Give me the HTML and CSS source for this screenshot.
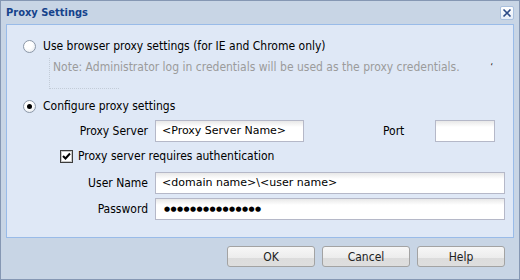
FILE: index.html
```html
<!DOCTYPE html>
<html>
<head>
    <meta charset="utf-8" />
    <title>Proxy Settings</title>
    <link rel="stylesheet" href="styles.css">
</head>
<body>
    <div class="win">
        <div class="titleBar">
            <span class="title">Proxy Settings</span>
            <span class="closeBtn">
                <svg width="10" height="10" viewBox="0 0 10 10">
                    <path d="M1.5 1.5 L8.5 8.5 M8.5 1.5 L1.5 8.5" stroke="#2b4a86" stroke-width="1.6" fill="none"/>
                </svg>
            </span>
        </div>
        <div class="panel">
            <div class="opt optFirst"><span class="radio"></span>Use browser proxy settings (for IE and Chrome only)</div>
            <div class="note">
                <span class="noteText">Note: Administrator log in credentials will be used as the proxy credentials.</span>
                <span class="tick">&#8216;</span>
            </div>
            <div class="opt optSecond"><span class="radio on"></span>Configure proxy settings</div>
            <div class="row rowServer">
                <label class="lbl">Proxy Server</label>
                <div class="field fieldServer">&lt;Proxy Server Name&gt;</div>
                <label class="lblPort">Port</label>
                <div class="field fieldPort"></div>
            </div>
            <div class="chkRow">
                <span class="check">
                    <svg width="9" height="9" viewBox="0 0 9 9">
                        <path d="M1 4 L3.5 6.5 L8 1.5" stroke="#000" stroke-width="2" fill="none"/>
                    </svg>
                </span>
                Proxy server requires authentication
            </div>
            <div class="row rowUser">
                <label class="lbl">User Name</label>
                <div class="field fieldWide">&lt;domain name&gt;\&lt;user name&gt;</div>
            </div>
            <div class="row rowPass">
                <label class="lbl">Password</label>
                <div class="field fieldWide pass">&#9679;&#9679;&#9679;&#9679;&#9679;&#9679;&#9679;&#9679;&#9679;&#9679;&#9679;&#9679;&#9679;&#9679;&#9679;</div>
            </div>
        </div>
        <div class="buttons">
            <button class="btn">OK</button>
            <button class="btn">Cancel</button>
            <button class="btn">Help</button>
        </div>
    </div>
</body>
</html>
```

FILE: styles.css
```css
body {
    margin: 0;
    font-family: "DejaVu Sans Condensed", "DejaVu Sans", sans-serif;
    font-size: 12px;
    color: #000;
    background: #fff;
}
.win {
    width: 518px;
    height: 278px;
    border: 1px solid #8597b3;
    background-color: #c8d5e5;
}
.titleBar {
    height: 23px;
    display: flex;
    align-items: center;
    padding: 0 5px 0 5px;
}
.title {
    font-weight: bold;
    font-size: 11px;
    color: #15428b;
    flex-grow: 1;
}
.closeBtn {
    width: 12px;
    height: 12px;
    border: 1px solid #a9c0de;
    border-radius: 2px;
    background: linear-gradient(#ffffff, #e4ecf7);
    display: flex;
    align-items: center;
    justify-content: center;
    margin-top: 1px;
}
.panel {
    margin: 0 5px;
    border: 1px solid #99bbe8;
    background-color: #dfe8f6;
    height: 199px;
    padding-top: 13px;
}
.opt {
    display: flex;
    align-items: center;
    height: 16px;
    padding-left: 16px;
}
.radio {
    width: 11px;
    height: 11px;
    border: 1px solid #8c98a8;
    border-radius: 50%;
    background: radial-gradient(circle at 40% 35%, #ffffff 40%, #dde3ea);
    margin-right: 7px;
    position: relative;
}
.radio.on::after {
    content: "";
    position: absolute;
    left: 3px;
    top: 3px;
    width: 5px;
    height: 5px;
    border-radius: 50%;
    background: #000;
}
.note {
    margin: 5px 0 0 42px;
    height: 30px;
    display: flex;
    align-items: flex-start;
    position: relative;
}
.note::before {
    content: "";
    position: absolute;
    left: 0;
    top: -1px;
    width: 69px;
    height: 30px;
    border-left: 1px dotted #c3ccd8;
    border-bottom: 1px dotted #c3ccd8;
}
.noteText {
    color: #9b9b9b;
    line-height: 16px;
    padding-left: 4px;
}
.tick {
    margin-left: auto;
    margin-right: 20px;
    font-size: 9px;
    line-height: 16px;
}
.optSecond {
    margin-top: 9px;
}
.row {
    display: flex;
    align-items: center;
    height: 22px;
}
.lbl {
    width: 141px;
    text-align: right;
    margin-right: 7px;
}
.field {
    height: 20px;
    border: 1px solid #b5b8c8;
    background: linear-gradient(#e8e8e8, #ffffff 6px);
    font-family: "DejaVu Sans", sans-serif;
    font-size: 11px;
    line-height: 20px;
    padding-left: 6px;
}
.rowServer {
    margin-top: 6px;
}
.fieldServer {
    width: 141px;
}
.lblPort {
    margin-left: 79px;
    width: 52px;
}
.fieldPort {
    width: 58px;
    padding-left: 0;
}
.chkRow {
    display: flex;
    align-items: center;
    height: 16px;
    margin-top: 6px;
    padding-left: 53px;
}
.check {
    width: 11px;
    height: 11px;
    border: 1px solid #3c3c3c;
    background: #fff;
    box-shadow: inset 0 0 0 1px #c8c8c8;
    margin-right: 5px;
    display: flex;
    align-items: center;
    justify-content: center;
}
.rowUser {
    margin-top: 8px;
}
.rowPass {
    margin-top: 4px;
}
.fieldWide {
    width: 342px;
}
.pass {
    font-size: 7px;
    letter-spacing: 0.4px;
    padding-left: 8px;
    width: 340px;
}
.buttons {
    display: flex;
    justify-content: flex-end;
    gap: 7px;
    margin-top: 8px;
    padding-right: 14px;
}
.btn {
    width: 88px;
    height: 21px;
    border: 1px solid #a3a3a3;
    border-radius: 3px;
    background: linear-gradient(#f7f7f7, #ececec 58%, #dcdcdc 60%, #dedede);
    font-family: "DejaVu Sans Condensed", "DejaVu Sans", sans-serif;
    font-size: 12px;
    color: #222;
    padding: 0;
}
```
